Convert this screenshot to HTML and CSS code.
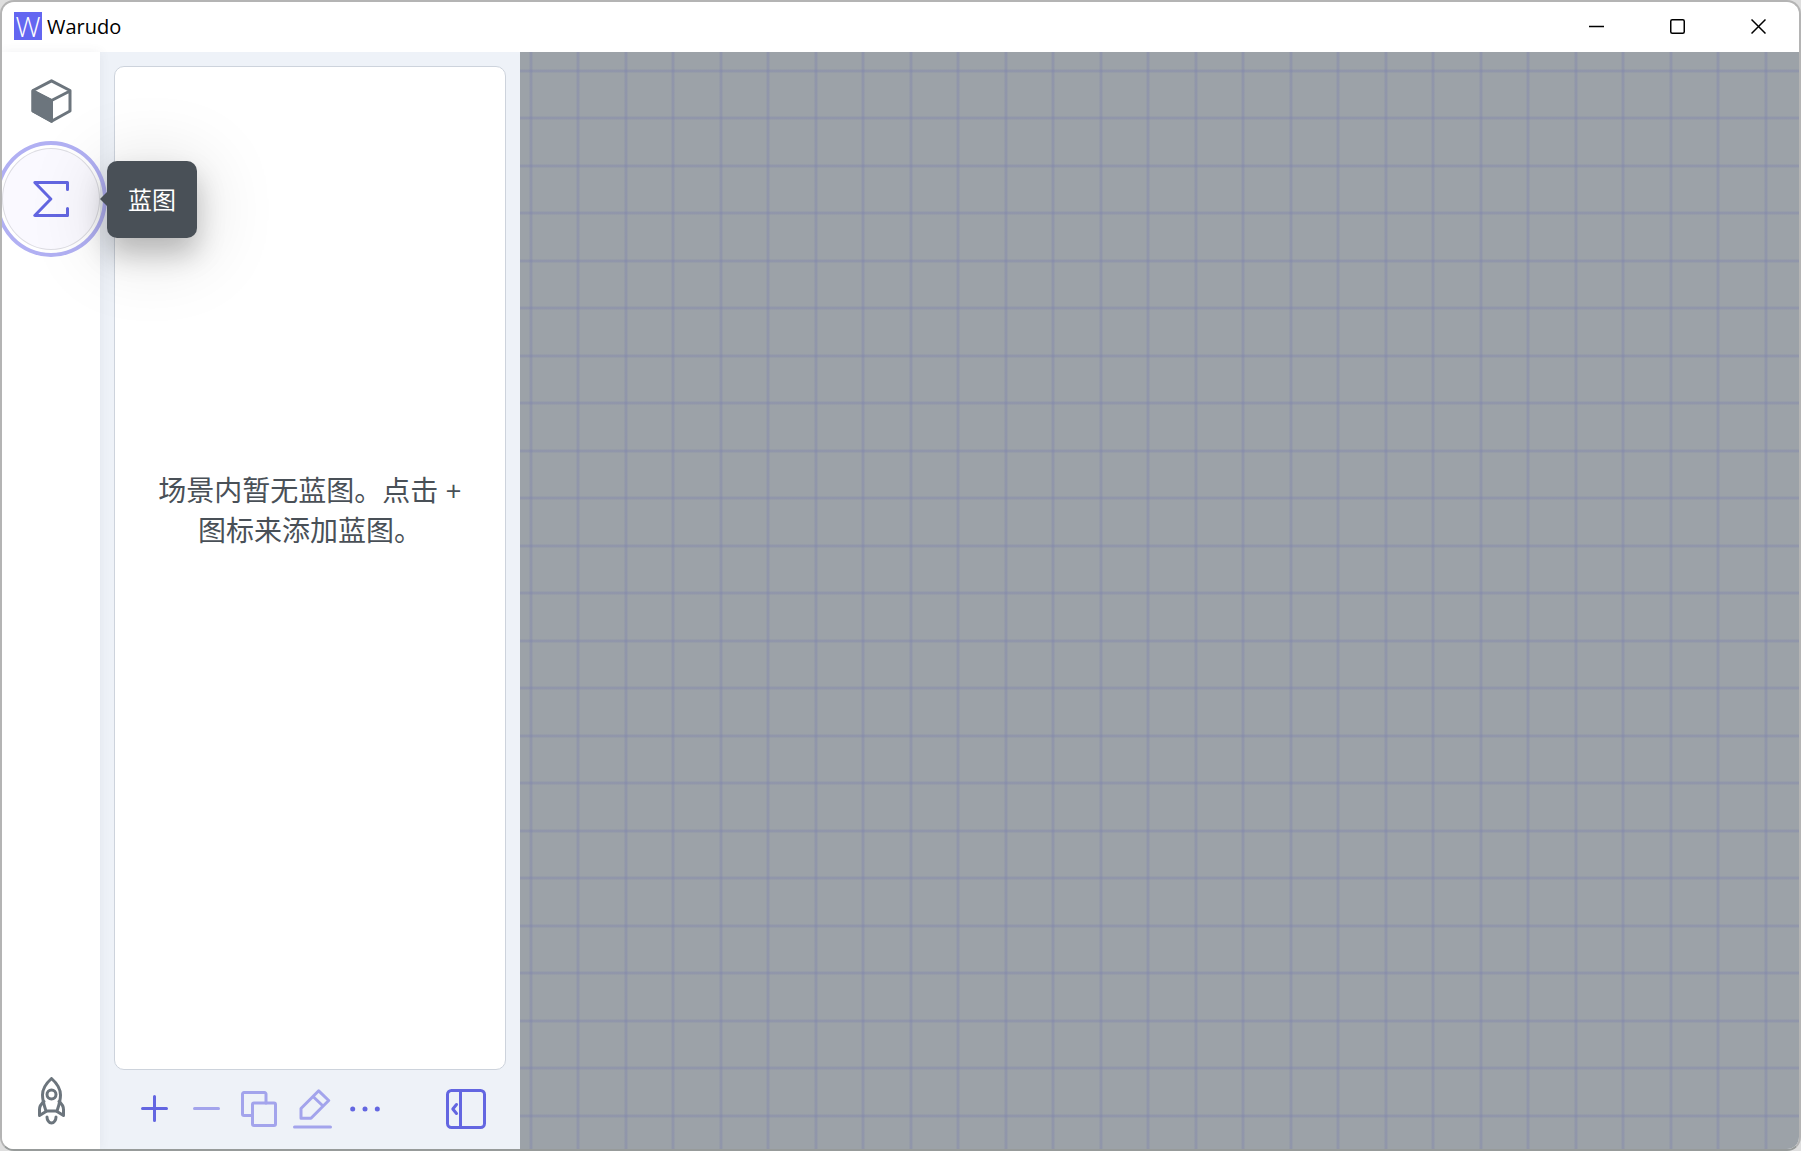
FILE: index.html
```html
<!DOCTYPE html>
<html lang="zh-CN">
<head>
<meta charset="utf-8">
<title>Warudo</title>
<link rel="stylesheet" href="styles.css">
</head>
<body>
<div class="window">
  <header class="titlebar">
    <span class="logo" aria-hidden="true">W</span>
    <h1 class="title">Warudo</h1>
    <div class="controls">
      <button class="control" type="button" aria-label="最小化">
        <svg width="15" height="15" viewBox="0 0 15 15"><path d="M0 7.5h15"/></svg>
      </button>
      <button class="control" type="button" aria-label="最大化">
        <svg width="15" height="15" viewBox="0 0 15 15"><rect x=".75" y=".75" width="13.5" height="13.5" rx="1.5"/></svg>
      </button>
      <button class="control" type="button" aria-label="关闭">
        <svg width="15" height="15" viewBox="0 0 15 15"><path d="M.5.5l14 14M14.5.5l-14 14"/></svg>
      </button>
    </div>
  </header>
  <div class="workspace">
    <nav class="sidebar">
      <button class="nav-button" type="button" aria-label="资源">
        <svg width="41" height="44" viewBox="0 0 41 44"><path d="M20.5 1.8 39 11.5V32L20.5 42.2 2 32V11.5ZM2 12l18.500 9.500L39 12"/><path class="solid" d="M2 12l18.500 9.500V42.200L2 32Z"/></svg>
      </button>
      <div class="nav-item">
        <button class="nav-button nav-button-active" type="button" aria-label="蓝图" aria-describedby="tip">
          <svg width="36" height="36" viewBox="0 0 36 36"><path d="M34.500 8.500V1.500H1.800L17.800 18 1.800 34.500H34.500V27.500"/></svg>
        </button>
        <div class="tooltip" id="tip" role="tooltip">蓝图</div>
      </div>
      <button class="nav-button nav-button-last" type="button" aria-label="启动">
        <svg width="27" height="48" viewBox="0 0 27 48"><path d="M13.500 1.500C9 5.500 4.500 10.500 4.500 18c0 6 2 11.500 3.500 16h11c1.500-4.500 3.500-10 3.500-16 0-7.500-4.500-12.500-9-16.500Z"/><circle cx="13.500" cy="17.500" r="4.500"/><path d="M6 24.500C3 27 1.500 29 1.500 32.500V38.500L8 34.500M21 24.500c3 2.500 4.500 4.500 4.500 8V38.500L19 34.500M9 40c0 3 2 6 4.500 6S18 43 18 40"/></svg>
      </button>
    </nav>
    <aside class="panel">
      <section class="list">
        <p class="empty">场景内暂无蓝图。点击 + 图标来添加蓝图。</p>
      </section>
      <div class="toolbar">
        <div class="actions">
          <button class="tool" type="button" aria-label="添加">
            <svg width="27" height="27" viewBox="0 0 27 27"><path d="M13.500 1.500v24M1.500 13.500h24"/></svg>
          </button>
          <button class="tool" type="button" aria-label="删除" disabled>
            <svg width="27" height="27" viewBox="0 0 27 27"><path d="M1.500 13.500h24"/></svg>
          </button>
          <button class="tool" type="button" aria-label="复制" disabled>
            <svg width="36" height="36" viewBox="0 0 36 36"><path d="M11.500 24.500H3A1.500 1.500 0 0 1 1.500 23V3A1.500 1.500 0 0 1 3 1.500h20.500A1.500 1.500 0 0 1 25 3v9"/><rect x="11.500" y="12" width="23" height="22.500" rx="1.500"/></svg>
          </button>
          <button class="tool" type="button" aria-label="重命名" disabled>
            <svg width="39" height="40" viewBox="0 0 39 40"><path d="M25.700 1.800 35.700 11.500 18 29.200H8V19.500ZM20 7.500 30 17M1.500 38h36"/></svg>
          </button>
          <button class="tool" type="button" aria-label="更多">
            <svg width="30" height="6" viewBox="0 0 30 6"><g class="dots"><circle cx="2.700" cy="3" r="2.500"/><circle cx="15" cy="3" r="2.500"/><circle cx="27.300" cy="3" r="2.500"/></g></svg>
          </button>
        </div>
        <button class="tool" type="button" aria-label="收起面板">
          <svg width="40" height="40" viewBox="0 0 40 40"><rect x="1.500" y="1.500" width="37" height="37" rx="4"/><path d="M14.500 1.500v37M10.500 15.500 6.800 20l3.700 4.500"/></svg>
        </button>
      </div>
    </aside>
    <main class="canvas" aria-label="蓝图编辑区"></main>
  </div>
</div>
</body>
</html>
```
FILE: styles.css
```css
* {
  box-sizing: border-box;
}

body {
  margin: 0;
  background: #dedede;
  color: #495057;
  font-family: "Open Sans", "Noto Sans CJK SC", sans-serif;
}

button {
  display: flex;
  align-items: center;
  justify-content: center;
  margin: 0;
  padding: 0;
  border: 0;
  background: none;
  color: inherit;
  font: inherit;
}

svg {
  display: block;
  fill: none;
  stroke: currentColor;
  stroke-width: 3;
  stroke-linecap: round;
  stroke-linejoin: round;
}

.window {
  display: flex;
  flex-direction: column;
  min-height: 100vh;
  overflow: hidden;
  border: 2px solid #b4b4b4;
  border-bottom-color: #979b9a;
  border-radius: 14px;
  background: #fff;
}

.titlebar {
  display: flex;
  align-items: center;
  height: 50px;
  padding: 0 0 2px 12px;
  color: #000;
}

.logo {
  width: 28px;
  height: 28px;
  background: #6366f1;
  color: #fff;
  font-size: 28px;
  font-weight: 300;
  line-height: 28px;
  text-align: center;
}

.title {
  margin: 0 auto 0 5px;
  padding-top: 2px;
  font-size: 20px;
  font-weight: 400;
  line-height: 28px;
}

.controls {
  display: flex;
  align-self: stretch;
}

.control {
  width: 81px;
}

.control svg {
  stroke-width: 1.5;
  stroke-linecap: butt;
}

.workspace {
  display: flex;
  flex: 1;
}

.sidebar {
  position: relative;
  z-index: 1;
  display: flex;
  flex-direction: column;
  width: 98px;
  background: #fff;
  box-shadow: 0 0 10px rgba(73, 80, 87, 0.08);
  color: #6c757d;
}

.nav-item {
  position: relative;
}

.nav-button {
  width: 98px;
  height: 98px;
}

.solid {
  fill: currentColor;
}

.nav-button-active {
  height: 102px;
  margin: -2px 0;
  border-radius: 50%;
  outline: 4px solid #b1b0f3;
  outline-offset: 3px;
  background: #faf9ff;
  box-shadow: inset 0 0 0 1px #dcdce2;
  color: #6366e1;
}

.nav-button-last {
  height: 96px;
  margin-top: auto;
}

.tooltip {
  position: absolute;
  top: 11px;
  left: 105px;
  padding: 18px 21px;
  border-radius: 10px;
  background: #495057;
  box-shadow: 0 16px 28px rgba(0, 0, 0, 0.22), 0 10px 80px rgba(0, 0, 0, 0.18);
  color: #fff;
  font-size: 24px;
  line-height: 41px;
  white-space: nowrap;
}

.tooltip::before {
  content: "";
  position: absolute;
  top: 31px;
  left: -7px;
  border: 7px solid transparent;
  border-right-color: #495057;
  border-left-width: 0;
}

.panel {
  display: flex;
  flex-direction: column;
  width: 420px;
  padding: 14px 14px 0;
  background: #eef2f8;
}

.list {
  display: flex;
  flex: 1;
  align-items: center;
  justify-content: center;
  padding: 0 32px 116px;
  border: 1px solid #cdd3dc;
  border-radius: 10px;
  background: #fff;
}

.empty {
  margin: 0;
  font-size: 28px;
  line-height: 40px;
  text-align: center;
}

.toolbar {
  display: flex;
  align-items: center;
  justify-content: space-between;
  height: 79px;
  padding: 0 20px 2px 14px;
  color: #6366e1;
}

.actions {
  display: grid;
  grid-template-columns: repeat(5, 1fr);
  width: 263px;
}

.tool:disabled {
  color: #a3a4ec;
}

.dots {
  fill: currentColor;
  stroke: none;
}

/* Two grid lines per 95px tile, each with a fainter pixel on both sides. */
.canvas {
  --edge: rgba(128, 134, 172, 0.2);
  --line: rgba(128, 134, 172, 0.42);
  --grid: var(--edge) 1px, var(--line) 1px, var(--line) 3px, var(--edge) 3px, var(--edge) 4px, transparent 4px,
    transparent 47px, var(--edge) 47px, var(--edge) 48px, var(--line) 48px, var(--line) 50px, var(--edge) 50px,
    var(--edge) 51px, transparent 51px;
  flex: 1;
  background-color: #9ca2a8;
  background-image: linear-gradient(90deg, var(--grid)), linear-gradient(var(--grid));
  background-position: 9px 0, 0 17px;
  background-size: 95px 100%, 100% 95px;
}
```
